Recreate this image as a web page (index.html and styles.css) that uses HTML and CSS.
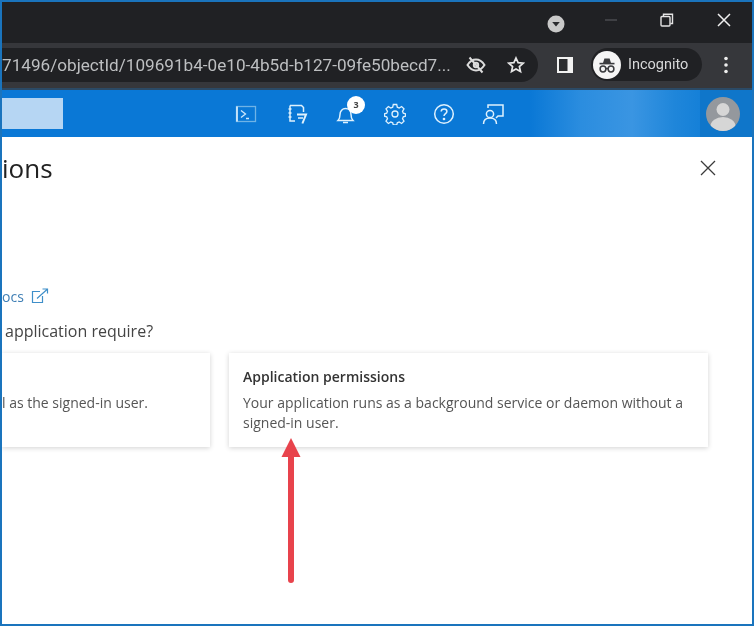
FILE: index.html
```html
<!DOCTYPE html>
<html lang="en">
<head>
<meta charset="utf-8">
<title>Application permissions</title>
<link rel="stylesheet" href="styles.css">
</head>
<body>
<div class="frame">
  <header class="titlebar">
    <svg class="tb-badge" width="18" height="18" viewBox="0 0 18 18"><circle cx="9" cy="9" r="8.5" fill="#c9c9c9"/><path d="M5.2 7h7.6L9 11.6z" fill="#2a2b2e"/></svg>
    <svg class="win min" width="14" height="14" viewBox="0 0 14 14"><path d="M1 7h12" stroke="#55565a" stroke-width="1.2"/></svg>
    <svg class="win restore" width="14" height="14" viewBox="0 0 14 14" fill="none" stroke="#e4e4e4" stroke-width="1.4"><rect x="1" y="3.5" width="9" height="9.5" rx="1"/><path d="M3.5 3V1.2h9V10.5H10.4"/></svg>
    <svg class="win" width="14" height="14" viewBox="0 0 14 14" fill="none" stroke="#f0f0f0" stroke-width="1.5"><path d="M1 1l12 12M13 1L1 13"/></svg>
  </header>
  <div class="toolbar">
    <div class="omnibox">
      <span class="url">71496/objectId/109691b4-0e10-4b5d-b127-09fe50becd7...</span>
      <svg class="om-eye" width="20" height="18" viewBox="0 0 20 18" fill="none" stroke="#dcdcdc" stroke-width="2"><path d="M1.5 9C4 5.2 6.8 3.6 10 3.6S16 5.2 18.5 9C16 12.8 13.2 14.4 10 14.4S4 12.8 1.5 9z"/><circle cx="10" cy="9" r="2.2"/><path d="M3.5 1.5l13 15"/></svg>
      <svg class="om-star" width="18" height="18" viewBox="0 0 18 18" fill="none" stroke="#e6e6e6" stroke-width="1.7"><path d="M9 2l2.1 4.7 5.1.5-3.8 3.4 1.1 5L9 13l-4.5 2.6 1.1-5L1.8 7.2l5.1-.5z"/></svg>
    </div>
    <svg class="side" width="18" height="18" viewBox="0 0 18 18"><rect x="1" y="1" width="16" height="16" fill="#f2f2f2"/><rect x="3" y="3" width="8.5" height="12" fill="#2c2d30"/></svg>
    <div class="pill">
      <svg width="28" height="28" viewBox="0 0 28 28"><circle cx="14" cy="14" r="14" fill="#f5f5f5"/><path d="M10 12l1.4-4.6h5.2L18 12z" fill="#3a3b3e"/><path d="M6.5 12.6h15" stroke="#3a3b3e" stroke-width="1.6"/><g fill="none" stroke="#3a3b3e" stroke-width="1.5"><circle cx="10" cy="18" r="2.9"/><circle cx="18" cy="18" r="2.9"/><path d="M12.8 17.6h2.4"/></g></svg>
      <span class="pill-label">Incognito</span>
    </div>
    <svg class="dots" width="6" height="20" viewBox="0 0 6 20" fill="#eee"><circle cx="3" cy="3.5" r="1.8"/><circle cx="3" cy="10" r="1.8"/><circle cx="3" cy="16.5" r="1.8"/></svg>
  </div>
  <nav class="portal">
    <div class="search"></div>
    <div class="nav-icons">
      <svg class="ni ni-first" width="22" height="22" viewBox="0 0 22 22" fill="none" stroke="#cfe8fb" stroke-width="1.3"><rect x="1.5" y="3.5" width="19" height="15" stroke="#6fb3e6"/><path d="M2 3.5v15" stroke-width="1.8"/><path d="M6 7.5l4.5 3.5L6 14.5M11 15.5h3"/></svg>
      <svg class="ni" width="22" height="22" viewBox="0 0 22 22" fill="none" stroke="#dff1fd" stroke-width="1.5"><path d="M4 2.5h11.5l2 2V9M4 2.5v15.500H9M2.500 6h3M2.500 10h3M2.500 14h3"/><path d="M11 11.500h9l-3.600 9" stroke-width="2"/><path d="M12 15h5"/></svg>
      <div class="bell-wrap">
        <svg class="ni" width="22" height="22" viewBox="0 0 22 22" fill="none" stroke="#dff1fd" stroke-width="1.500"><path d="M3 17.500c1.500-1.500 2-3 2-6 0-3.600 2.400-6 5.500-6s5.500 2.400 5.500 6c0 3 .5 4.500 2 6z"/><path d="M8 19.500h5"/></svg>
        <span class="badge">3</span>
      </div>
      <svg class="ni" width="22" height="22" viewBox="0 0 22 22" fill="none" stroke="#dff1fd" stroke-width="1.300"><path d="M9.300 1.500h3.400l.6 2.700 1.900.8 2.400-1.500 2.400 2.400-1.500 2.400.8 1.900 2.200.6v2.400l-2.200.6-.8 1.900 1.500 2.400-2.400 2.400-2.400-1.500-1.900.8-.6 2.200H9.300l-.6-2.200-1.900-.8-2.400 1.500-2.400-2.400 1.500-2.400-.8-1.900-2.200-.6v-2.400l2.200-.6.8-1.900-1.500-2.400 2.400-2.400 2.400 1.500 1.900-.8z"/><circle cx="11" cy="11" r="3"/></svg>
      <svg class="ni" width="22" height="22" viewBox="0 0 22 22" fill="none" stroke="#dff1fd" stroke-width="1.500"><circle cx="11" cy="11" r="9.300"/><path d="M8.200 8.600c0-1.700 1.300-2.700 2.900-2.700s2.800 1 2.800 2.500c0 2.300-2.900 2.300-2.900 4.700"/><circle cx="11" cy="16" r=".6" fill="#dff1fd"/></svg>
      <svg class="ni" width="22" height="22" viewBox="0 0 22 22" fill="none" stroke="#dff1fd" stroke-width="1.500"><path d="M6 5V2h15v11h-5l-2 2"/><circle cx="8" cy="11" r="3.600"/><path d="M1.500 21c0-4 2.800-6 6.500-6s6.500 2 6.500 6"/></svg>
    </div>
    <div class="blurred-name"></div>
    <div class="account">
      <svg width="34" height="34" viewBox="0 0 34 34"><defs><clipPath id="av"><circle cx="17" cy="17" r="17"/></clipPath></defs><circle cx="17" cy="17" r="17" fill="#94989d"/><g clip-path="url(#av)" fill="#d6d6d6"><circle cx="17" cy="12.500" r="6.500"/><ellipse cx="17" cy="29" rx="12.500" ry="9"/></g></svg>
    </div>
  </nav>
  <main class="blade">
    <div class="blade-head">
      <h1 class="blade-title">ions</h1>
      <svg class="close" width="16" height="16" viewBox="0 0 16 16" fill="none" stroke="#3b3b3b" stroke-width="1.300"><path d="M1 1l14 14M15 1L1 15"/></svg>
    </div>
    <a class="docs">ocs <svg width="18" height="16" viewBox="0 0 18 16" fill="none" stroke="#3f8fc9" stroke-width="1.200"><path d="M9 3.500H1.500v11h10V8"/><path d="M6 10.500L16 1.500M11.500 1h5v4.500"/></svg></a>
    <p class="question">application require?</p>
    <div class="cards">
      <section class="card card-left">
        <p class="card-text">l as the signed-in user.</p>
      </section>
      <section class="card card-right">
        <h2 class="card-title">Application permissions</h2>
        <p class="card-text">Your application runs as a background service or daemon without a signed-in user.</p>
      </section>
    </div>
    <svg class="arrow" width="24" height="146" viewBox="0 0 24 146"><path d="M12 1l9.500 19h-6.500v123a3 3 0 0 1-6 0V20h-6.500z" fill="#e8434c"/></svg>
  </main>
</div>
</body>
</html>
```
FILE: styles.css
```css
* { box-sizing: border-box; }
html, body { margin: 0; height: 100%; background: #fff; }
body { font-family: "Open Sans", "Liberation Sans", sans-serif; }
.frame {
  position: relative;
  width: 754px;
  height: 626px;
  border: 2px solid #1a74bd;
  display: flex;
  flex-direction: column;
  overflow: hidden;
  filter: blur(0.6px);
}
.titlebar {
  height: 41px;
  flex: none;
  background: #202124;
  display: flex;
  align-items: center;
  padding: 0 0 6px 545px;
}
.titlebar svg { flex: none; }
.tb-badge { margin-top: 8px; margin-right: 39px; }
.min { margin-right: 42px; }
.restore { margin-right: 43px; }
.toolbar {
  height: 47px;
  flex: none;
  background: #36373b;
  border-bottom: 2px solid #2b4a66;
  display: flex;
  align-items: center;
  padding-bottom: 2px;
}
.omnibox {
  width: 536px;
  height: 34px;
  background: #202124;
  border-radius: 0 17px 17px 0;
  display: flex;
  align-items: center;
}
.url { width: 461px; color: #bdbfc1; font: 17.150px/20px Roboto, sans-serif; white-space: nowrap; overflow: hidden; }
.om-eye { margin-left: 3px; }
.om-star { margin-left: 21px; }
.side { margin-left: 18px; }
.pill {
  width: 111px;
  height: 33px;
  margin-left: 17px;
  border-radius: 17px;
  background: #202124;
  display: flex;
  align-items: center;
  gap: 7px;
  padding-left: 2px;
}
.pill-label { color: #d8d9da; font: 14.500px/18px Roboto, sans-serif; }
.dots { margin-left: 21px; }
.portal {
  height: 47px;
  flex: none;
  background: #0a78d6;
  display: flex;
  align-items: center;
}
.search { width: 61px; height: 31px; background: #b6d6f3; }
.nav-icons { display: flex; align-items: center; gap: 27px; margin-left: 172px; }
.ni { display: block; }
.ni-first { margin-right: 2px; }
.bell-wrap { position: relative; }
.badge {
  position: absolute;
  top: -7px;
  right: -8px;
  width: 18px;
  height: 18px;
  border-radius: 50%;
  background: #fff;
  color: #444;
  font: 700 9px/18px "Open Sans", sans-serif;
  text-align: center;
}
.blurred-name {
  width: 170px;
  height: 47px;
  margin-left: 26px;
  background: linear-gradient(90deg, #0a78d6 0%, #2b8ddf 30%, #3a95e2 60%, #1f86da 85%, #1580d8 100%);
}
.account {
  flex: 1;
  height: 47px;
  background: #0f76ca;
  display: flex;
  align-items: center;
  padding-left: 6px;
}
.blade { flex: 1; background: #fff; position: relative; }
.blade-head { display: flex; justify-content: space-between; align-items: center; padding: 0 36px 0 0; height: 62px; }
.blade-title { margin: 0; font: 500 26px/32px "Open Sans", sans-serif; color: #222; }
.docs {
  display: flex;
  align-items: center;
  gap: 7px;
  margin-top: 88px;
  height: 18px;
  color: #3f7fb5;
  font-size: 14px;
}
.question { margin: 16px 0 0 3px; color: #444; font-size: 16px; line-height: 20px; }
.cards { display: flex; gap: 19px; margin-top: 12px; }
.card {
  height: 94px;
  background: #fff;
  box-shadow: 0 1px 5px rgba(0, 0, 0, .18);
  padding: 15px 14px;
}
.card-left { width: 208px; padding: 40px 0 0; }
.card-right { width: 479px; }
.card-title { margin: 0 0 7px; font: 600 14px/18px "Open Sans", sans-serif; color: #333; }
.card-text { margin: 0; font-size: 14px; line-height: 20px; color: #555; }
.arrow { position: absolute; left: 277px; top: 300px; }
```
